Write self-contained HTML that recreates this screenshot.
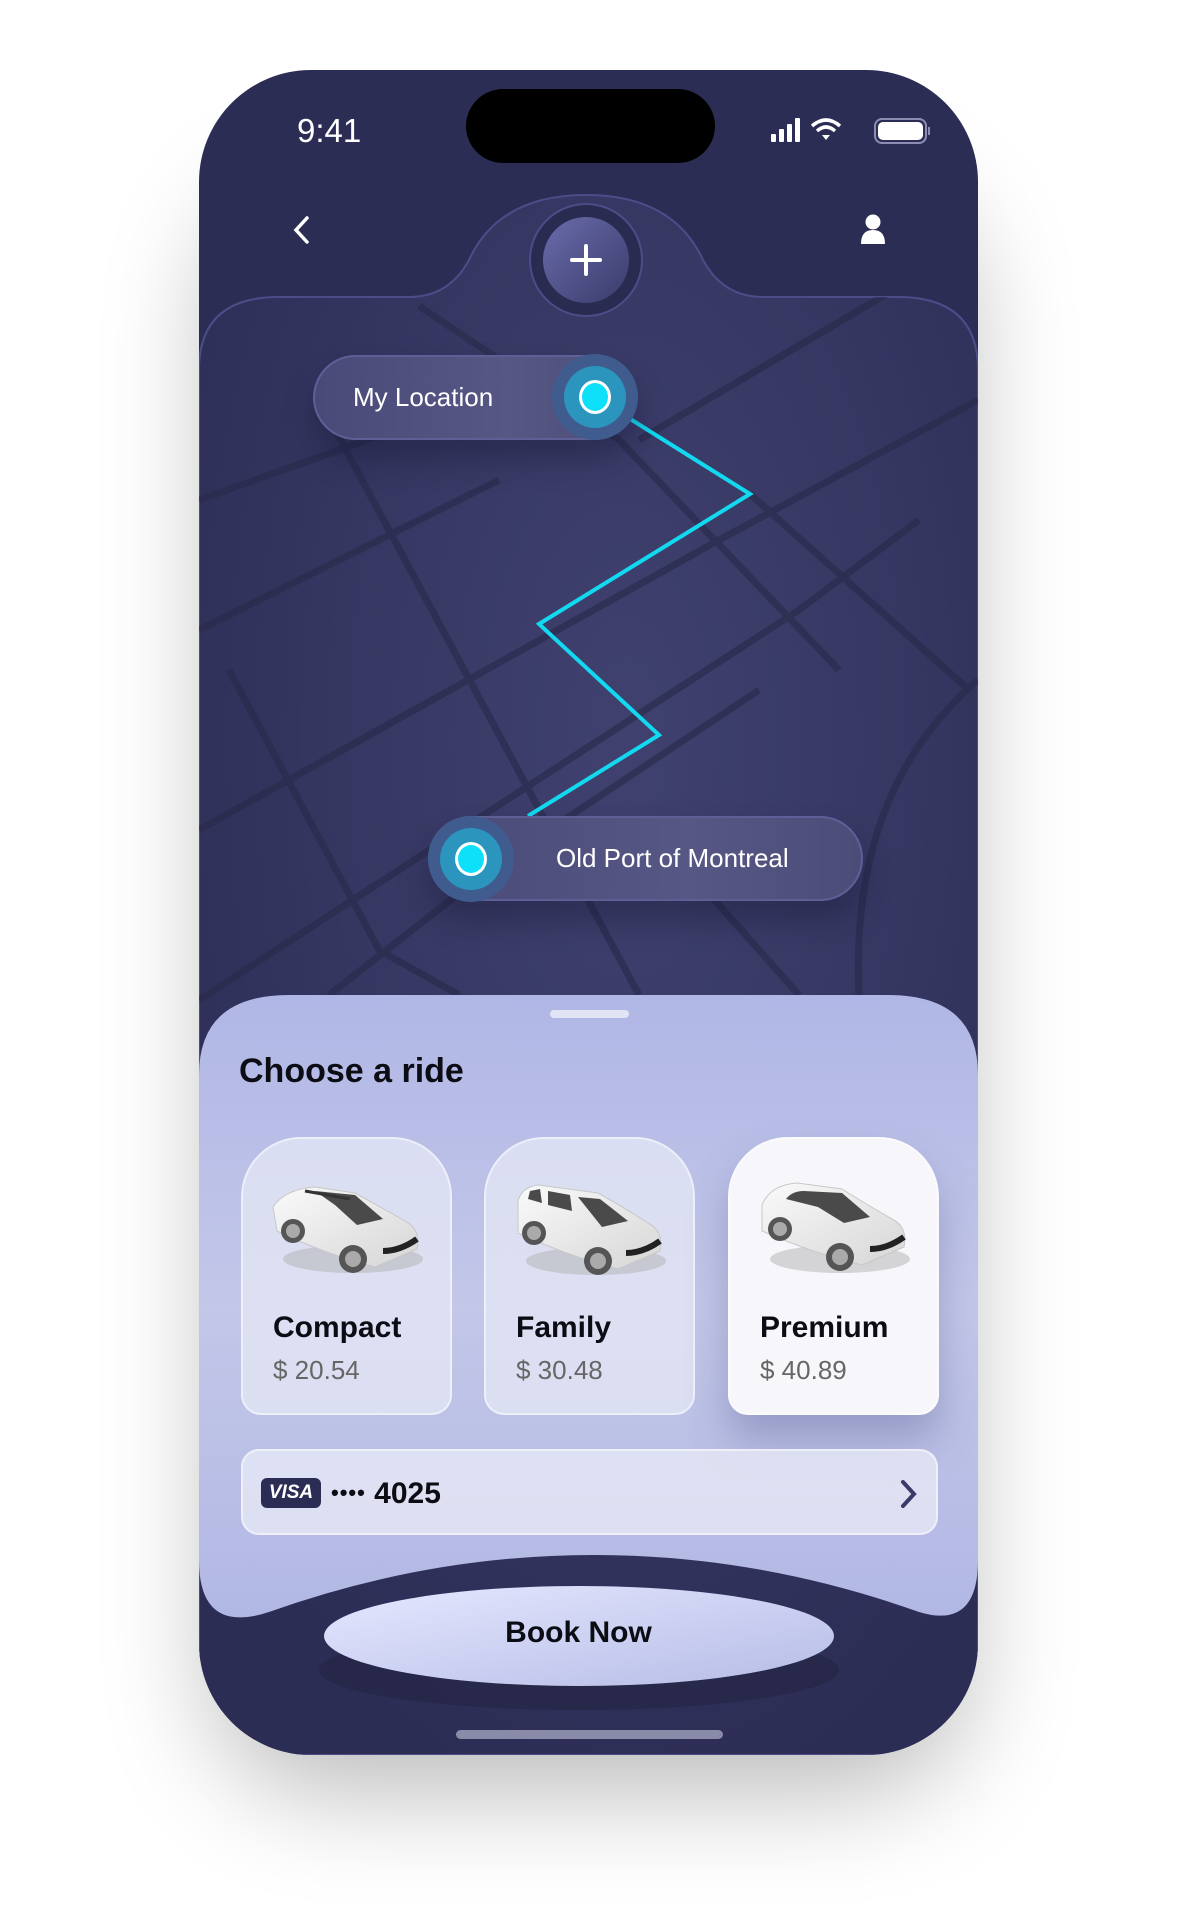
<!DOCTYPE html>
<html><head><meta charset="utf-8"><style>
*{margin:0;padding:0;box-sizing:border-box}
body{width:1180px;height:1920px;background:#fff;position:relative;overflow:hidden;font-family:"Liberation Sans",sans-serif}
.shadow{position:absolute;left:215px;top:140px;width:749px;height:1600px;border-radius:110px;box-shadow:0 50px 110px rgba(0,0,0,.28)}
.phone{position:absolute;left:199px;top:70px;width:779px;height:1685px;border-radius:112px;overflow:hidden;background:#2c2d55}
.abs{position:absolute}
.pill{position:absolute;border-radius:43px;background:linear-gradient(90deg,#4a4a78,#565784 60%,#4c4c78);border:2px solid #5f5f98;color:#fff;font-size:26px;display:flex;align-items:center;box-shadow:0 20px 30px rgba(20,20,50,.35)}
.dot{position:absolute;width:86px;height:86px;border-radius:50%;background:#405c8e;display:flex;align-items:center;justify-content:center}
.dot>div{width:62px;height:62px;border-radius:50%;background:#2b95bd;display:flex;align-items:center;justify-content:center}
.dot>div>div{width:32px;height:34px;border-radius:50%;background:#0ee0fa;border:3px solid #fff}
.card{position:absolute;top:1067px;width:211px;height:278px;border-radius:60px 60px 20px 20px;background:rgba(230,232,245,.75);border:2px solid rgba(255,255,255,.5)}
.card.sel{background:#f6f6fb;box-shadow:0 25px 40px rgba(80,85,140,.35)}
.card .n{position:absolute;left:30px;top:172px;font-size:30px;font-weight:bold;color:#0c0c14}
.card .p{position:absolute;left:30px;top:216px;font-size:26px;color:#666}
.card svg{position:absolute;left:22px;top:20px}
</style></head><body>
<div class="shadow"></div>
<div class="phone">
<svg class="abs" style="left:0;top:0" width="779" height="1685">
<defs>
<radialGradient id="mg" cx="0.55" cy="0.35" r="0.7"><stop offset="0" stop-color="#40416f"/><stop offset="1" stop-color="#2c2d55"/></radialGradient>
<linearGradient id="pb" x1="0" y1="0" x2="1" y2="1"><stop offset="0" stop-color="#6a6cac"/><stop offset="1" stop-color="#3a3b6a"/></linearGradient>
<linearGradient id="sh" x1="0" y1="0" x2="0" y2="1"><stop offset="0" stop-color="#b0b7e6"/><stop offset=".5" stop-color="#c3c7e8"/><stop offset="1" stop-color="#b1b8e4"/></linearGradient>
<linearGradient id="bk" x1="0" y1="0" x2="1" y2="1"><stop offset="0" stop-color="#e6e8ff"/><stop offset="1" stop-color="#b5bce6"/></linearGradient>
<linearGradient id="car" x1="0" y1="0" x2="1" y2="1"><stop offset="0" stop-color="#fafafa"/><stop offset="1" stop-color="#d6d6d6"/></linearGradient>
<clipPath id="mc"><path d="M0 300 Q0 227 80 227 L210 227 Q250 227 270 190 Q300 125 387 125 Q474 125 504 190 Q524 227 564 227 L699 227 Q779 227 779 300 L779 1685 L0 1685Z"/></clipPath>
</defs>
<path d="M0 300 Q0 227 80 227 L210 227 Q250 227 270 190 Q300 125 387 125 Q474 125 504 190 Q524 227 564 227 L699 227 Q779 227 779 300 L779 1685 L0 1685Z" fill="url(#mg)" stroke="#4c4d88" stroke-width="2"/>
<g clip-path="url(#mc)" stroke="#282949" stroke-width="7" fill="none" opacity=".6">
<path d="M220 236 L420 370 L640 600"/>
<path d="M0 430 L210 355"/><path d="M0 560 L300 410"/>
<path d="M440 370 L779 170"/>
<path d="M0 760 L520 470 L779 330"/>
<path d="M0 930 L600 540 L720 450"/>
<path d="M30 600 L180 880 L260 925"/>
<path d="M120 330 L440 925"/><path d="M480 790 L600 925"/>
<path d="M551 424 L770 620"/><path d="M779 610 Q650 720 660 925"/>
<path d="M130 925 L290 800 L560 620"/>
</g>
<polyline points="396,327 551,424 340,554 460,665 329,746" fill="none" stroke="#12d8f0" stroke-width="4"/>
<circle cx="387" cy="190" r="56" fill="#2a2b50" stroke="#4c4d88" stroke-width="2"/>
<circle cx="387" cy="190" r="43" fill="url(#pb)"/>
<path d="M387 176 V204 M373 190 H401" stroke="#fff" stroke-width="4" stroke-linecap="round"/>
<path d="M0 1005 Q0 925 90 925 L689 925 Q779 925 779 1005 L779 1490 Q779 1560 720 1542 Q560 1485 395 1485 Q230 1485 70 1542 Q0 1565 0 1490Z" fill="url(#sh)"/>
<ellipse cx="380" cy="1600" rx="260" ry="40" fill="#1d1d38" opacity=".4"/>
<ellipse cx="380" cy="1566" rx="255" ry="50" fill="url(#bk)"/>
<rect x="351" y="940" width="79" height="8" rx="4" fill="#e2e4f6"/>
<rect x="257" y="1660" width="267" height="9" rx="4.5" fill="#8a8ba8"/>
<rect x="267" y="19" width="249" height="74" rx="37" fill="#000"/>
<path d="M108 148 L97 160 L108 172" stroke="#fff" stroke-width="3.5" fill="none" stroke-linecap="round"/>
<circle cx="674" cy="152" r="7.5" fill="#fff"/><path d="M662 174 Q662 160 674 160 Q686 160 686 174Z" fill="#fff"/>
<g fill="#fff"><rect x="572" y="64" width="5" height="8" rx="1"/><rect x="580" y="59" width="5" height="13" rx="1"/><rect x="588" y="54" width="5" height="18" rx="1"/><rect x="596" y="48" width="5" height="24" rx="1"/></g>
<path d="M613 56 Q627 44 641 56 M618 61 Q627 53 636 61" stroke="#fff" stroke-width="3.5" fill="none"/><path d="M623 65 L627 70 L631 65Z" fill="#fff"/>
<rect x="676" y="49" width="51" height="24" rx="7" fill="none" stroke="#8c8db0" stroke-width="2"/><rect x="679" y="52" width="45" height="18" rx="5" fill="#fff"/><rect x="729" y="57" width="2" height="8" fill="#8c8db0"/>
</svg>
<div class="abs" style="left:98px;top:42px;font-size:33px;color:#fff;font-weight:500">9:41</div>
<div class="pill" style="left:114px;top:285px;width:324px;height:85px;padding-left:38px">My Location</div>
<div class="dot" style="left:353px;top:284px"><div><div></div></div></div>
<div class="pill" style="left:229px;top:746px;width:435px;height:85px;padding-left:126px">Old Port of Montreal</div>
<div class="dot" style="left:229px;top:746px"><div><div></div></div></div>
<div class="abs" style="left:40px;top:982px;font-size:34px;font-weight:bold;color:#0c0c14">Choose a ride</div>
<div class="card" style="left:42px"><svg width="165" height="130" viewBox="0 0 165 130"><ellipse cx="88" cy="100" rx="70" ry="14" fill="#aaa" opacity=".45"/><path d="M8 48 Q20 30 50 28 L90 34 Q110 45 140 62 Q156 70 152 90 L110 108 Q60 95 12 72Z" fill="url(#car)" stroke="#c8c8c8"/><path d="M50 32 L90 36 L118 60 L92 66 L70 46Z" fill="#4a4a4a"/><path d="M40 32 L85 40" stroke="#333" stroke-width="3"/><circle cx="28" cy="72" r="12" fill="#555"/><circle cx="28" cy="72" r="7" fill="#aaa"/><circle cx="88" cy="100" r="14" fill="#555"/><circle cx="88" cy="100" r="8" fill="#aaa"/><path d="M118 92 Q135 92 152 80" stroke="#222" stroke-width="6" fill="none"/></svg><div class="n">Compact</div><div class="p">$ 20.54</div></div>
<div class="card" style="left:285px"><svg width="165" height="130" viewBox="0 0 165 130"><ellipse cx="88" cy="102" rx="70" ry="14" fill="#aaa" opacity=".45"/><path d="M10 42 Q14 28 30 26 L90 34 Q110 45 140 64 Q156 72 152 92 L110 110 Q60 97 10 74Z" fill="url(#car)" stroke="#c8c8c8"/><path d="M22 32 L32 30 L34 44 L20 40Z M40 32 L62 36 L64 52 L40 46Z M70 38 L92 40 L120 62 L94 68Z" fill="#4a4a4a"/><circle cx="26" cy="74" r="12" fill="#555"/><circle cx="26" cy="74" r="7" fill="#aaa"/><circle cx="90" cy="102" r="14" fill="#555"/><circle cx="90" cy="102" r="8" fill="#aaa"/><path d="M118 94 Q135 94 152 82" stroke="#222" stroke-width="6" fill="none"/></svg><div class="n">Family</div><div class="p">$ 30.48</div></div>
<div class="card sel" style="left:529px"><svg width="165" height="130" viewBox="0 0 165 130"><ellipse cx="88" cy="100" rx="70" ry="14" fill="#aaa" opacity=".45"/><path d="M10 46 Q18 26 45 24 L90 30 Q112 44 140 60 Q156 68 152 88 L110 106 Q60 94 10 72Z" fill="url(#car)" stroke="#c8c8c8"/><path d="M34 40 Q40 32 52 32 L90 34 L118 58 L92 64 L66 48Z" fill="#4a4a4a"/><circle cx="28" cy="70" r="12" fill="#555"/><circle cx="28" cy="70" r="7" fill="#aaa"/><circle cx="88" cy="98" r="14" fill="#555"/><circle cx="88" cy="98" r="8" fill="#aaa"/><path d="M118 90 Q135 90 152 78" stroke="#222" stroke-width="6" fill="none"/></svg><div class="n">Premium</div><div class="p">$ 40.89</div></div>
<div class="abs" style="left:42px;top:1379px;width:697px;height:86px;border-radius:18px;background:rgba(228,230,245,.85);border:2px solid rgba(255,255,255,.5)">
<div class="abs" style="left:18px;top:27px;width:60px;height:30px;border-radius:6px;background:#2c2d55;color:#fff;font-weight:bold;font-style:italic;font-size:19px;text-align:center;line-height:30px">VISA</div>
<div class="abs" style="left:88px;top:24px;font-size:30px;line-height:36px;font-weight:bold;color:#0c0c14"><span style="font-size:22px;letter-spacing:1px;vertical-align:3px">••••</span> 4025</div>
<svg class="abs" style="left:656px;top:28px" width="20" height="30"><path d="M4 3 L15 15 L4 27" stroke="#3a3b6a" stroke-width="4" fill="none" stroke-linecap="round"/></svg>
</div>
<div class="abs" style="left:125px;top:1546px;width:509px;text-align:center;font-size:30px;font-weight:bold;color:#0c0c14">Book Now</div>
</div>
</body></html>
